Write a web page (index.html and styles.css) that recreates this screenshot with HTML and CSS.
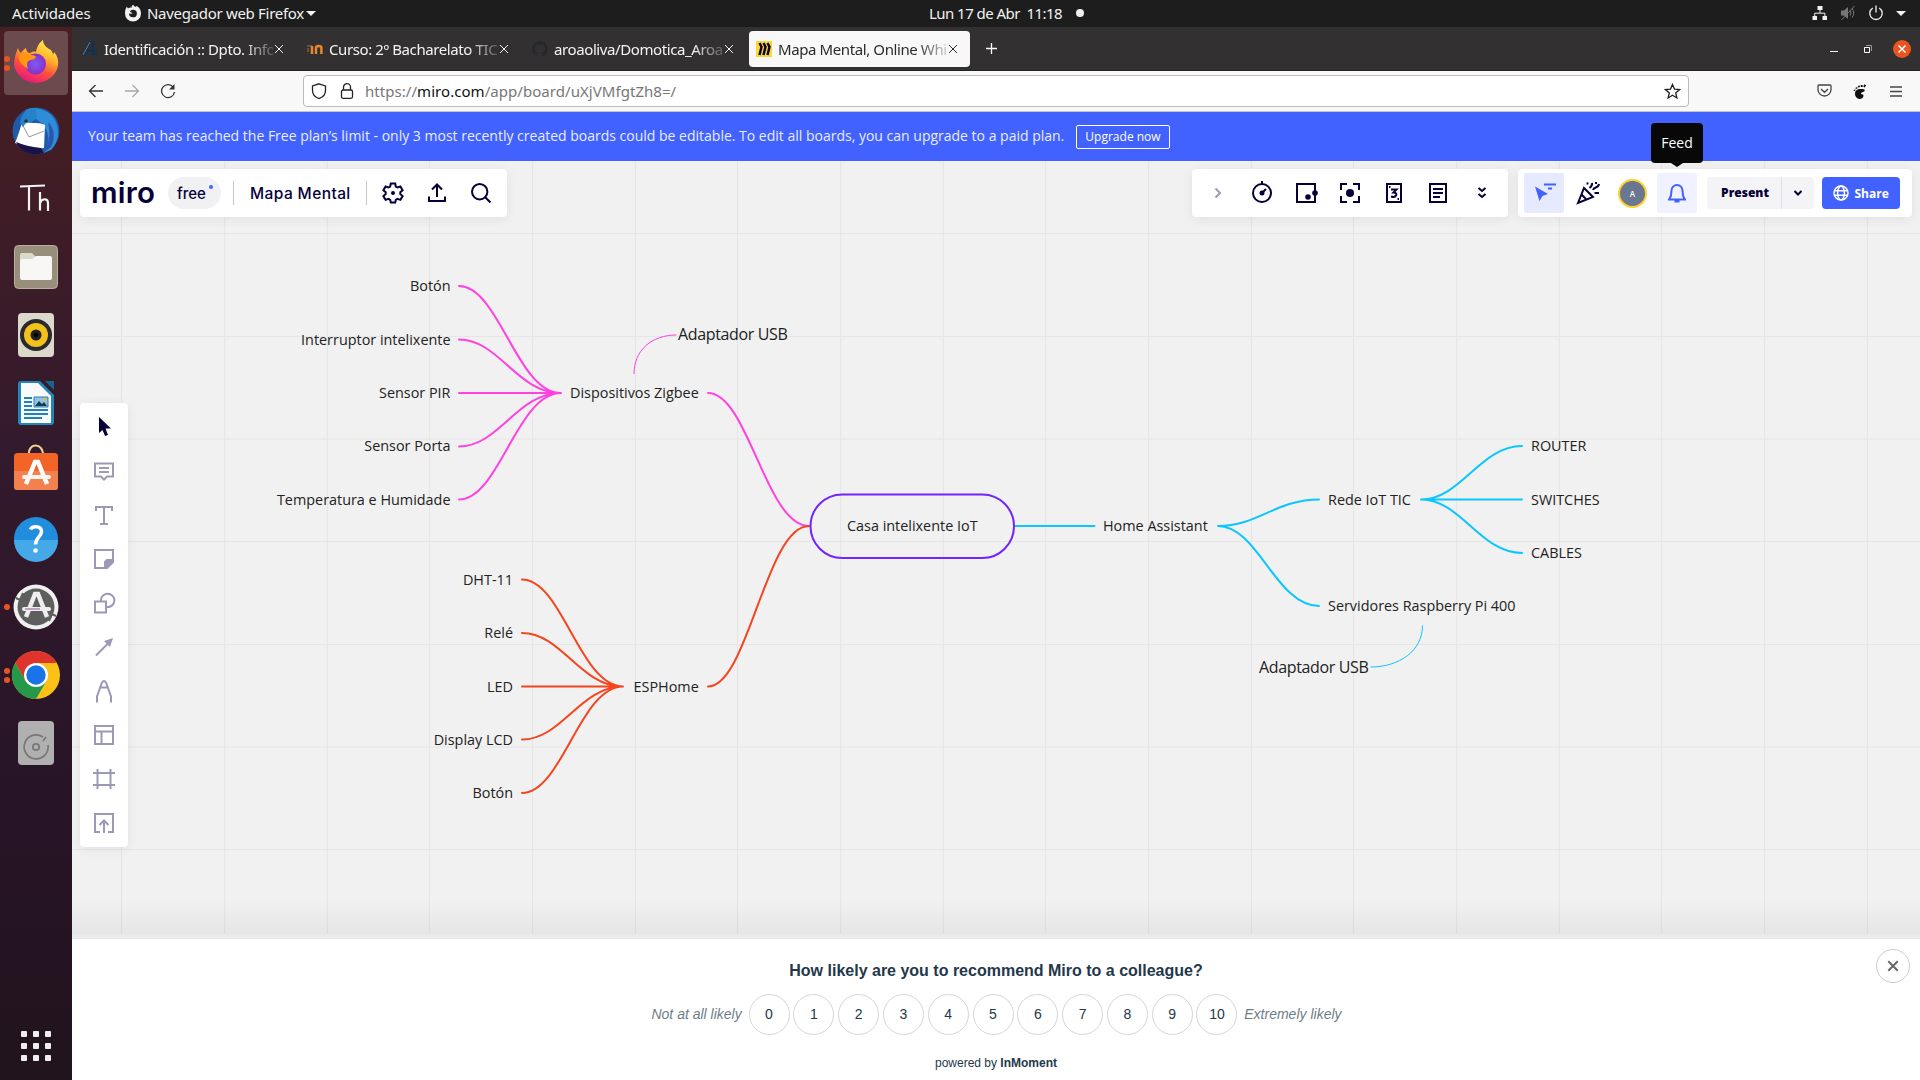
FILE: index.html
```html
<!DOCTYPE html>
<html lang="gl">
<head>
<meta charset="utf-8">
<title>Mapa Mental, Online Whiteboard</title>
<link rel="stylesheet" href="styles.css">
</head>
<body>
<div class="desktop">
  <header class="topbar">
    <span class="activities">Actividades</span>
    <span class="appmenu">
      <svg width="18" height="18" viewBox="0 0 18 18"><path d="M3 2.500c.3 1 .6 1.500 1 2C5 3.500 6.500 3.300 8 3.500 7 2.500 8 1 9.500.7c0 1 .7 1.500 2 2.100 1-.3 1.200-.8 1.200-.8C15.500 3.500 17 6 17 9.500a8 8 0 0 1-16 0C1 7 1.500 4.500 3 2.500z" fill="#f2f2f2"/><path d="M9 5.800c1.800-.2 4 1 3.900 3.600A3.900 3.900 0 0 1 5 9.300c1 .7 2.500.8 3.500-.3L6 8c0-1 1.200-1.900 3-2.200z" fill="#1d1d1d"/></svg>
      <span class="appname">Navegador web Firefox</span>
      <i class="caret"></i>
    </span>
    <span class="clock">Lun 17 de Abr&nbsp; 11:18</span><i class="clockdot"></i>
    <span class="tray">
      <svg width="16" height="16" viewBox="0 0 16 16" fill="#f2f2f2"><path d="M5.500 1h5v4h-5zM.5 11h4.500v4H.5zM10.500 11H15v4h-4.500z"/><path d="M8 5v3M2.700 11V8.200h10.200V11" fill="none" stroke="#f2f2f2"/></svg>
      <svg width="16" height="16" viewBox="0 0 16 16" fill="#777"><path d="M1 5.500h3L8 2v12l-4-3.500H1z"/><path d="M10 5.500q2 2.500 0 5M12 3.500q3.500 4.500 0 9M1.500 15 14.500 1" fill="none" stroke="#777"/></svg>
      <svg width="16" height="16" viewBox="0 0 16 16" fill="none" stroke="#f2f2f2" stroke-width="1.300"><path d="M4.800 3a6.200 6.200 0 1 0 6.400 0M8 .5v7"/></svg>
      <i class="caret"></i>
    </span>
  </header>

  <div class="workspace">
    <nav class="dock">
      <div class="launch active two"><svg width="48" height="48" viewBox="0 0 48 48"><defs><linearGradient id="ff" x1=".75" y1="0" x2=".3" y2="1"><stop offset="0" stop-color="#fff44f"/><stop offset=".35" stop-color="#ffb52e"/><stop offset=".65" stop-color="#ff4f3a"/><stop offset="1" stop-color="#e31587"/></linearGradient><radialGradient id="fp"><stop offset="0" stop-color="#7a5cf5"/><stop offset="1" stop-color="#8a2fc8"/></radialGradient></defs><path d="M6 9c1 3 2 4 3 5 1-2 3-4 5-5 0 3 2 5 4 5 2-1 4-2 6-1 1-6 4-10 7-12 0 5 4 8 8 10 1 2 2 3 2 5l1-3c3 3 5 8 4 14A22.500 22 0 0 1 2 26c0-7 2-12 4-17z" fill="url(#ff)"/><circle cx="23.500" cy="25" r="10.500" fill="url(#fp)"/><path d="M7 17c4-3 9-3 12-1 3 0 5 1 5 2-1 2-3 3-6 3-4 2-3 5-2 9-6-4-10-8-9-13z" fill="#ff980e"/></svg></div>
      <div class="launch"><svg width="48" height="48" viewBox="0 0 48 48"><circle cx="24" cy="24" r="23.500" fill="#1e5aa8"/><path d="M13 4C19-2 35 2 41 10c8 11 6 25-2 33l-8 3c7-9 7-19 0-29z" fill="#2e8dd8"/><path d="M36 15c6 6 8 15 3 25l-8 6c6-9 8-18 5-31z" fill="#2b55b0"/><path d="M3 36c4-9 6-18 8-23 5 5 14 1 22 5l-1 23C21 42 12 39 3 36z" fill="#fff"/><path d="M10 17l7 13 15-6" fill="none" stroke="#999"/><path d="M8 16C9 7 14 2 22 1c5 6 4 14-8 15l-3 4z" fill="#2583cc"/><circle cx="14" cy="14" r="1.800" fill="#333"/><path d="M4 35c7 3 15 5 25 6l3 5C20 50 8 45 4 35z" fill="#1b1248"/></svg></div>
      <div class="launch"><svg width="48" height="48" viewBox="0 0 48 48" fill="none" stroke="#f4f4f4" stroke-width="2.200"><path d="M8 11.500 33 10.500M17 11v24.500M28 17v18.500M28 28c2-5 8-5 8 0v8"/></svg></div>
      <div class="launch"><svg width="48" height="48" viewBox="0 0 48 48"><rect x="2.500" y="2.500" width="43" height="43" rx="4" fill="#978e7b" stroke="#b8af9c"/><path d="M8 12q0-2 2-2h10l4 4h14v3H8z" fill="#dcd8cc"/><path d="M8 18q0-2 2-2h10l4-3h14q2 0 2 2v20q0 2-2 2H10q-2 0-2-2z" fill="#f8f7f5"/></svg></div>
      <div class="launch"><svg width="48" height="48" viewBox="0 0 48 48"><rect x="6" y="2" width="36" height="44" rx="4" fill="#ddd8cc"/><circle cx="24" cy="24" r="16" fill="#282a30"/><circle cx="24" cy="24" r="12" fill="#f3c11c"/><circle cx="24" cy="24" r="5.500" fill="#202124"/><circle cx="24" cy="24" r="2.300" fill="#000"/></svg></div>
      <div class="launch"><svg width="48" height="48" viewBox="0 0 48 48"><path d="M9 2h19l14 14v27q0 3-3 3H9q-3 0-3-3V5q0-3 3-3z" fill="#2386b8"/><path d="M9 4h17l13 13v27H9z" fill="#f8fafb"/><path d="M33 2h9v9z" fill="#15658e"/><path d="M12 19h8M12 23h8M12 27h8M12 31h24M12 35h24M12 39h18" stroke="#1f85b7" stroke-width="2"/><path d="M22 18h14v10H22z" fill="#8ec4e4" stroke="#317ca9"/><path d="m23 27 4-5 3 3 2-2 3 4z" fill="#163b54"/><circle cx="33" cy="20.500" r="1.500" fill="#f4b929"/></svg></div>
      <div class="launch"><svg width="48" height="48" viewBox="0 0 48 48"><path d="M17 9C15-5 32-5 31 9" fill="none" stroke="#f3cf98" stroke-width="2"/><rect x="2" y="6" width="44" height="37" rx="3.500" fill="#f36427"/><path d="M2 24h44v15.500q0 3.500-3.500 3.500h-37Q2 43 2 39.500z" fill="#f38150"/><path d="m14 37 9-22h3l9 22" fill="none" stroke="#fff" stroke-width="4.500"/><path d="M12 30h25" stroke="#fff5ee" stroke-width="4" stroke-linecap="round"/></svg></div>
      <div class="launch"><svg width="48" height="48" viewBox="0 0 48 48"><circle cx="24" cy="24" r="22" fill="#208ddd"/><path d="M2 25h44a22 22 0 0 1-44 0z" fill="#45a9e9"/><path d="M18.500 14.500c1.500-4 11-4 11 2 0 5-6 6-6 13" fill="none" stroke="#fff" stroke-width="3.500"/><circle cx="23.500" cy="35.500" r="2.300" fill="#fff"/></svg></div>
      <div class="launch one"><svg width="48" height="48" viewBox="0 0 48 48"><circle cx="24" cy="24" r="22.500" fill="#f0f0f0"/><circle cx="24" cy="24" r="18.500" fill="#5e5e5e"/><path d="m4 15 4 2 3-7M44 33l-4-2-3 7" stroke="#5e5e5e" stroke-width="2" fill="none"/><path d="m14 34 9-23h3l9 23" fill="none" stroke="#eee" stroke-width="4.500"/><path d="M12 26h25" stroke="#eee" stroke-width="4" stroke-linecap="round"/><path d="M13 26h15" stroke="#91578c"/></svg></div>
      <div class="launch two"><svg width="48" height="48" viewBox="0 0 48 48"><circle cx="24" cy="24" r="24" fill="#fbc116"/><path d="M3.200 12A24 24 0 0 1 44.800 12H24L13.600 30z" fill="#df342b"/><path d="M3.200 12A24 24 0 0 0 24 48l10.400-18H13.600z" fill="#269849"/><circle cx="24" cy="24" r="12" fill="#fff"/><circle cx="24" cy="24" r="9.700" fill="#1a73e8"/></svg></div>
      <div class="launch"><svg width="48" height="48" viewBox="0 0 48 48"><rect x="6" y="2" width="36" height="44" rx="4" fill="#b0b0b0"/><path d="M31 18a12 12 0 1 0 5 8M31 22l3-4" fill="none" stroke="#777" stroke-width="1.700"/><circle cx="24" cy="28" r="3.200" fill="none" stroke="#777" stroke-width="1.700"/></svg></div>
      <div class="apps"><i></i><i></i><i></i><i></i><i></i><i></i><i></i><i></i><i></i></div>
    </nav>

    <main class="browser">
      <div class="tabs">
        <div class="tab"><svg width="16" height="16" viewBox="0 0 16 16"><path d="M1 15 8 1h3v13M4 10h11M9 13h6" fill="none" stroke="#14304d" stroke-width="2.500"/><path d="M1 14 8 1" stroke="#638297" fill="none"/></svg><span class="tabtitle">Identificación :: Dpto. Info</span><svg class="x" viewBox="0 0 8 8"><path d="m0 0 8 8M8 0 0 8"/></svg></div>
        <div class="tab"><svg width="16" height="16" viewBox="0 0 16 16" fill="none"><path d="M0 5h5" stroke="#555" stroke-width="2"/><path d="M5 5v8M9 13V7q0-2 2.700-2t2.700 2v6" stroke="#e8862e" stroke-width="2.500"/><path d="M1 7v4" stroke="#7b4c2c" stroke-width="2"/></svg><span class="tabtitle">Curso: 2º Bacharelato TIC</span><svg class="x" viewBox="0 0 8 8"><path d="m0 0 8 8M8 0 0 8"/></svg></div>
        <div class="tab"><svg width="16" height="16" viewBox="0 0 16 16"><path fill="#24292e" d="M8 0a8 8 0 0 0-2.500 15.600c.4.100.5-.2.500-.4v-1.500c-2.200.5-2.700-1-2.700-1-.4-.9-.9-1.200-.9-1.200-.7-.5.100-.5.100-.5.800.1 1.200.8 1.200.8.700 1.300 1.900.9 2.300.7.100-.5.300-.9.500-1.100-1.800-.2-3.600-.9-3.600-4 0-.9.300-1.600.8-2.100-.1-.2-.4-1 .1-2.100 0 0 .7-.2 2.200.8a7.600 7.600 0 0 1 4 0c1.500-1 2.200-.8 2.200-.8.400 1.100.2 1.900.1 2.100.5.600.8 1.300.8 2.100 0 3.100-1.900 3.700-3.700 3.900.3.300.6.800.6 1.500v2.200c0 .2.100.5.500.4A8 8 0 0 0 8 0z"/></svg><span class="tabtitle">aroaoliva/Domotica_Aroa</span><svg class="x" viewBox="0 0 8 8"><path d="m0 0 8 8M8 0 0 8"/></svg></div>
        <div class="tab current"><svg width="16" height="16" viewBox="0 0 16 16"><path fill="#fdd835" d="M0 0h16v16H0z"/><path d="m3.500 2 2 4-2 8M7.500 2l2 4-2 8M11.500 2l2 4-2 8" fill="none" stroke="#0b0733" stroke-width="2.500"/></svg><span class="tabtitle">Mapa Mental, Online Whi</span><svg class="x" viewBox="0 0 8 8"><path d="m0 0 8 8M8 0 0 8"/></svg></div>
        <svg class="newtab" width="11" height="11" viewBox="0 0 11 11"><path d="M5.500 0v11M0 5.500h11" stroke="#fff" stroke-width="1.300"/></svg>
        <div class="wincontrols">
          <svg width="8" height="8" viewBox="0 0 8 8"><path d="M0 6.500h8" stroke="#fff"/></svg>
          <svg width="8" height="8" viewBox="0 0 8 8" fill="none"><path d="M2 .5h5.500V6" stroke="#999"/><path d="M.5 2.500h5v5h-5z" stroke="#fff"/></svg>
          <svg width="18" height="18" viewBox="0 0 18 18"><circle cx="9" cy="9" r="9" fill="#e95420"/><path d="m5.500 5.500 7 7m0-7-7 7" stroke="#fff" stroke-width="1.500"/></svg>
        </div>
      </div>

      <div class="navbar">
        <svg class="nb" width="16" height="16" viewBox="0 0 16 16"><path d="M15 8H1.500M7.500 2l-6 6 6 6"/></svg>
        <svg class="nb dim" width="16" height="16" viewBox="0 0 16 16"><path d="M1 8h13.500M8.500 2l6 6-6 6"/></svg>
        <svg class="nb" width="16" height="16" viewBox="0 0 16 16"><path d="M13.500 4.500A6.500 6.500 0 1 0 14.500 9"/><path d="M14.500 1v5.500H9z" fill="#333" stroke="none"/></svg>
        <div class="url">
          <svg width="16" height="16" viewBox="0 0 16 16"><path d="M8 .8 14.500 3v4.500C14.500 12 11 14.500 8 15.500 5 14.500 1.500 12 1.500 7.500V3z"/></svg>
          <svg width="14" height="16" viewBox="0 0 14 16"><rect x="1.500" y="7" width="11" height="8.300" rx="1.500"/><path d="M3.500 7V4.200a3.500 3.500 0 0 1 7 0V7"/></svg>
          <span class="address">https://<b>miro.com</b>/app/board/uXjVMfgtZh8=/</span>
          <svg class="star" width="17" height="17" viewBox="0 0 17 17"><path d="m8.500 1.500 2 4.600 5 .5-3.800 3.300 1.200 5.100-4.400-2.700L4.100 15l1.200-5.100-3.800-3.300 5-.5z"/></svg>
        </div>
        <div class="ext">
          <svg width="15" height="14" viewBox="0 0 15 14"><path d="M2 1h11q1 0 1 1v3.500a6.500 6.500 0 0 1-13 0V2q0-1 1-1zM4 5l3.500 3.300L11 5"/></svg>
          <svg width="14" height="15" viewBox="0 0 14 15"><path d="M7.500 5c3 0 5 .3 4 2-.8 1.300-3.500 1-3.500 2.500 0 1.200 2.500.2 2.500 2.200 0 2-2 3.300-4 3.300C4 15 2 12.500 2 9.800 2 7 4 5 7.500 5z" fill="#111" stroke="none"/><path d="M12.300.8 11 3M8.700 1v2M5.700 1.700l.4 1.600M3.200 3.500l.6 1.200M1.200 5.800l.8.800" stroke="#111" stroke-width="1.900"/></svg>
          <svg width="12" height="11" viewBox="0 0 12 11"><path d="M0 1h12M0 5.500h12M0 10h12"/></svg>
        </div>
      </div>

      <div class="banner"><span class="notice">Your team has reached the Free plan’s limit - only 3 most recently created boards could be editable. To edit all boards, you can upgrade to a paid plan.</span><span class="upgrade">Upgrade now</span></div>

      <section class="board">
        <svg class="links" width="1848" height="773" viewBox="72 161 1848 773" fill="none">
          <path class="grid" d="M121.500 161v773M224.500 161v773M327.500 161v773M429.500 161v773M532.500 161v773M635.500 161v773M737.500 161v773M840.500 161v773M943.500 161v773M1045.500 161v773M1148.500 161v773M1251.500 161v773M1353.500 161v773M1456.500 161v773M1559.500 161v773M1661.500 161v773M1764.500 161v773M1867.500 161v773M72 233.500h1848M72 336.500h1848M72 439h1848M72 541.500h1848M72 644.500h1848M72 747h1848M72 849.500h1848"/>
          <g class="link pink"><path d="M459 286C499 286 517 393 561 393M459 339.500C499 339.500 517 393 561 393M459 393H561M459 446.500C499 446.500 517 393 561 393M459 499.500C499 499.500 517 393 561 393M708 393C748 393 766 526 809 526"/><path class="thin" d="M634 373.500C634 350 652 335 676 335"/></g>
          <g class="link red"><path d="M522 579.500C562 579.500 580 686.500 623 686.500M522 633C562 633 580 686.500 623 686.500M522 686.500H623M522 739.500C562 739.500 580 686.500 623 686.500M522 793C562 793 580 686.500 623 686.500M708 686.500C748 686.500 766 526 809 526"/></g>
          <g class="link blue"><path d="M1014 526H1094.500M1218 526C1258 526 1276 499.500 1319 499.500M1218 526C1258 526 1276 606 1319 606M1421 499.500C1461 499.500 1480 446 1522 446M1421 499.500H1522M1421 499.500C1461 499.500 1480 553 1522 553"/><path class="thin" d="M1422.500 626C1422.500 651 1399 667 1371 667"/></g>
          <rect x="810.500" y="494.500" width="203.500" height="63.500" rx="31.750" stroke="#7323ff" stroke-width="2"/>
        </svg>
        <div class="nodes">
          <span class="node end" style="left:378.500px;top:125px">Botón</span>
          <span class="node end" style="left:378.500px;top:179px">Interruptor intelixente</span>
          <span class="node end" style="left:378.500px;top:232px">Sensor PIR</span>
          <span class="node end" style="left:378.500px;top:285px">Sensor Porta</span>
          <span class="node end" style="left:378.500px;top:339px">Temperatura e Humidade</span>
          <span class="node" style="left:498px;top:232px">Dispositivos Zigbee</span>
          <span class="node big" style="left:606px;top:173px">Adaptador USB</span>
          <span class="node end" style="left:441px;top:419px">DHT-11</span>
          <span class="node end" style="left:441px;top:472px">Relé</span>
          <span class="node end" style="left:441px;top:526px">LED</span>
          <span class="node end" style="left:441px;top:579px">Display LCD</span>
          <span class="node end" style="left:441px;top:632px">Botón</span>
          <span class="node" style="left:561.500px;top:526px">ESPHome</span>
          <span class="node" style="left:775px;top:365px">Casa intelixente IoT</span>
          <span class="node" style="left:1031px;top:365px">Home Assistant</span>
          <span class="node" style="left:1256px;top:339px">Rede IoT TIC</span>
          <span class="node" style="left:1459px;top:285px">ROUTER</span>
          <span class="node" style="left:1459px;top:339px">SWITCHES</span>
          <span class="node" style="left:1459px;top:392px">CABLES</span>
          <span class="node" style="left:1256px;top:445px">Servidores Raspberry Pi 400</span>
          <span class="node big" style="left:1187px;top:506px">Adaptador USB</span>
        </div>

        <div class="overlay">
          <div class="toprow">
            <div class="panel brand">
              <span class="logo">miro</span>
              <span class="free">free<i></i></span>
              <i class="sep"></i>
              <span class="boardname">Mapa Mental</span>
              <i class="sep"></i>
              <svg class="ic" viewBox="0 0 24 24"><path d="m9.800 2.500-.6 3-1.700 1-2.900-1-2.200 3.800 2.300 2v1.800l-2.300 2 2.200 3.800 2.900-1 1.700 1 .6 2.600h4.400l.6-2.600 1.700-1 2.900 1 2.200-3.800-2.300-2v-1.800l2.300-2-2.200-3.800-2.900 1-1.700-1-.6-3z"/><circle cx="12" cy="12" r="1" fill="currentColor"/></svg>
              <svg class="ic" viewBox="0 0 24 24"><path d="M4 15.500V20h16v-4.500M12 16V4M7 8.500l5-5 5 5"/></svg>
              <svg class="ic" viewBox="0 0 24 24"><circle cx="10.700" cy="10.700" r="7.700"/><path d="m16.200 16.200 5.300 5.300"/></svg>
            </div>
            <div class="panel apps-bar">
              <svg class="ic faint" viewBox="0 0 24 24"><path d="m9.500 7.500 4.500 4.500-4.500 4.500"/></svg>
              <svg class="ic" viewBox="0 0 24 24"><circle cx="12" cy="12" r="9"/><path d="M12 0v3M12 12l4-4"/><circle cx="12" cy="12" r="1.500" fill="currentColor"/></svg>
              <svg class="ic" viewBox="0 0 24 24"><path d="M21 10V3H3v18h18v-7"/><circle cx="14" cy="16" r="2.800" fill="currentColor" stroke="none"/><circle cx="21" cy="12" r="2.800" fill="currentColor" stroke="none"/></svg>
              <svg class="ic" viewBox="0 0 24 24"><path d="M9 3H3v6M15 3h6v6M21 15v6h-6M9 21H3v-6"/><circle cx="12" cy="12" r="4" fill="currentColor" stroke="none"/></svg>
              <svg class="ic" viewBox="0 0 24 24"><rect x="5" y="3" width="14" height="18"/><path d="M9 8.500h5.500l-3 3c5 0 3 6-2.500 4M7 6h1.500M15.500 18H17"/></svg>
              <svg class="ic" viewBox="0 0 24 24"><rect x="4" y="3" width="16" height="18"/><path d="M7 8h10M7 12h10M7 16h7"/></svg>
              <svg class="ic" viewBox="0 0 24 24"><path d="m8.500 7 3.500 3 3.500-3M8.500 13l3.500 3 3.500-3"/></svg>
            </div>
            <div class="panel share-bar">
              <span class="tool picked"><svg viewBox="0 0 24 24"><path d="M3 5.500 16 13l-5.500 2L7.500 20z" fill="currentColor"/><path d="M12 3.500h12M16 7.500h4" stroke="currentColor" stroke-width="2"/></svg></span>
              <svg class="ic party" viewBox="0 0 24 24"><path d="M2 22 8 7l9 9-15 6zM9 8l7 7M6 14l4 4M13.500 7q3-2 2.500-5M17 9c1-4 5-1 6-6M18.500 12H23M11.500 1.500v2M20 1v2"/></svg>
              <span class="avatar">A</span>
              <span class="tool bell"><svg viewBox="0 0 24 24" fill="none" stroke="currentColor" stroke-width="2"><path d="M3 18.500h18M4.500 18Q6.500 15 6.500 9.500a5.500 5.500 0 0 1 11 0q0 5.500 2 8.500M9.500 20.500h5"/></svg><span class="tip">Feed</span></span>
              <span class="present"><b>Present</b><i><svg width="10" height="10" viewBox="0 0 10 10"><path d="m1.500 3 3.500 3.500L8.500 3"/></svg></i></span>
              <span class="share"><svg width="16" height="16" viewBox="0 0 16 16"><circle cx="8" cy="8" r="7"/><ellipse cx="8" cy="8" rx="3.400" ry="7"/><path d="M1 5.700h14M1 10.300h14"/></svg>Share</span>
            </div>
          </div>
          <div class="panel tools">
            <svg class="ic" viewBox="0 0 24 24"><path d="m7 2 12 11.500h-5.500L16 20l-3 1-2.500-6L7 18z" fill="currentColor" stroke="none"/></svg>
            <svg class="ic" viewBox="0 0 24 24"><path d="M3 4.500h18v13h-6l-3 3-3-3H3zM7 9h10M7 13h10"/></svg>
            <svg class="ic" viewBox="0 0 24 24"><path d="M4 8V4h16v4M12 4v17M8 21h8"/></svg>
            <svg class="ic" viewBox="0 0 24 24"><path d="M3 3h18v11l-7 7H3z"/><path d="M13 21v-6l2-2h6v2l-6 6z" fill="currentColor"/></svg>
            <svg class="ic" viewBox="0 0 24 24"><path d="M3 10.500h11v11H3zM9 10a6.700 6.700 0 1 1 6 6"/></svg>
            <svg class="ic" viewBox="0 0 24 24"><path d="M4 20.500 17 7.500"/><path d="m21 3-3 9-6-6z" fill="currentColor" stroke="none"/></svg>
            <svg class="ic" viewBox="0 0 24 24"><path d="M5 23.500v-6l5-14q2-3 4 0l5 14v6M8.500 8.500h7"/></svg>
            <svg class="ic" viewBox="0 0 24 24"><path d="M3 3h18v18H3zM3 8.500h18M9.500 9v12"/></svg>
            <svg class="ic" viewBox="0 0 24 24"><path d="M5.500 2v20M18.500 2v20M1 6h22M1 18h22"/></svg>
            <svg class="ic" viewBox="0 0 24 24"><path d="M8 21H3V3h18v18h-5M12 22V10M7.500 14 12 9.500l4.500 4.500"/></svg>
          </div>
        </div>
      </section>

      <section class="survey">
        <h2>How likely are you to recommend Miro to a colleague?</h2>
        <div class="scale"><em class="lo">Not at all likely</em><span>0</span><span>1</span><span>2</span><span>3</span><span>4</span><span>5</span><span>6</span><span>7</span><span>8</span><span>9</span><span>10</span><em class="hi">Extremely likely</em></div>
        <p>powered by <b>InMoment</b></p>
        <div class="close"><svg width="12" height="12" viewBox="0 0 12 12"><path d="m1.300 1.300 9.400 9.400M10.700 1.300l-9.400 9.400"/></svg></div>
      </section>
    </main>
  </div>
</div>
</body>
</html>
```
FILE: styles.css
```css
* { box-sizing: border-box; }
body { margin: 0; overflow: hidden; font-family: "Open Sans", "Noto Sans", sans-serif; }
svg { display: block; flex: none; }
.desktop { width: 1920px; height: 1080px; display: flex; flex-direction: column; }

.topbar { height: 27px; background: #1d1d1d; color: #f2f2f2; display: grid; grid-template-columns: 112px 805px 145px 1fr auto; align-items: center; padding: 0 14px 1px 12px; font: 15px "Noto Sans", sans-serif; white-space: nowrap; }
.activities { letter-spacing: -0.15px; }
.appmenu { display: flex; align-items: center; gap: 5px; }
.appname { letter-spacing: -0.3px; width: 154px; }
.caret { border: 5px solid transparent; border-top-color: #f2f2f2; border-bottom: 0; }
.clock { letter-spacing: -0.55px; }
.clockdot { width: 8px; height: 8px; border-radius: 50%; background: #f2f2f2; margin-left: 2px; }
.tray { display: flex; align-items: center; gap: 12px; }

.workspace { flex: 1; display: flex; min-height: 0; }
.dock { width: 72px; background: linear-gradient(#481e22, #331a2c 40%, #271427 75%, #21141c); display: flex; flex-direction: column; align-items: center; gap: 4px; padding-top: 4px; }
.launch { width: 64px; height: 64px; border-radius: 4px; display: grid; place-items: center; position: relative; }
.launch svg { overflow: visible; }
.launch.active { background: #6b4b4d; }
.launch.one::before, .launch.two::before, .launch.two::after { content: ""; position: absolute; left: 0; top: 29px; width: 6px; height: 6px; border-radius: 50%; background: #e95420; }
.launch.two::before { top: 25px; }
.launch.two::after { top: 34px; }
.apps { margin-top: auto; margin-bottom: 19px; display: grid; grid-template-columns: repeat(3, 6px); gap: 6px; }
.apps i { width: 6px; height: 6px; border-radius: 1px; background: #f0eeee; }

.browser { flex: 1; display: flex; flex-direction: column; min-width: 0; }
.tabs { height: 44px; background: #333031; border-bottom: 1px solid #222; display: flex; align-items: center; padding: 0 9px 0 0; color: #f4f4f4; }
.tab { width: 225px; height: 36px; padding: 0 10px; display: flex; align-items: center; font: 15px "Noto Sans", sans-serif; }
.tab.current { width: 221px; margin-left: 2px; padding: 0 10px 0 7px; background: #f8f8f8; color: #2b2b2b; border-radius: 4px; }
.tabtitle { margin-left: 6px; width: 169px; white-space: nowrap; letter-spacing: -0.4px; -webkit-mask: linear-gradient(90deg, #000 82%, #0003 100%); mask: linear-gradient(90deg, #000 82%, #0003 100%); }
.x { width: 8px; height: 8px; margin-left: 2px; stroke: currentColor; fill: none; overflow: visible; }
.newtab { margin-left: 16px; }
.wincontrols { margin-left: auto; display: flex; align-items: center; gap: 26px; }
.wincontrols svg:last-child { margin-left: -5px; }

.navbar { height: 41px; background: #f8f8f8; border-bottom: 1px solid #c4c4c4; display: flex; align-items: center; padding-left: 16px; }
.nb { margin-right: 20px; stroke: #333; fill: none; stroke-width: 1.3; }
.dim { opacity: .4; }
.url { margin-left: 107px; width: 1386px; height: 32px; border: 1px solid #bbb; border-radius: 4px; background: #fff; display: flex; align-items: center; padding: 0 7px; gap: 13px; }
.url svg { stroke: #222; fill: none; stroke-width: 1.3; }
.address { font: 15px "Noto Sans", sans-serif; color: #777; letter-spacing: .05px; margin-left: -2px; }
.address b { color: #111; font-weight: 400; }
.star { margin-left: auto; }
.ext { margin-left: auto; padding-right: 18px; display: flex; align-items: center; gap: 23px; }
.ext svg { stroke: #444; fill: none; stroke-width: 1.3; }
.ext svg:first-child { margin-right: -1.5px; }

.banner { height: 49px; background: #4262ff; color: #e8ecff; display: flex; align-items: center; padding: 0 0 3px 16px; font-size: 14px; white-space: nowrap; }
.notice { width: 988px; }
.upgrade { width: 94px; height: 24px; margin-top: 3px; border: 1px solid #fff; border-radius: 2px; display: grid; place-items: center; font-size: 12px; color: #fff; }

.board { height: 773px; position: relative; background: #f1f1f1; }
.board::after { content: ""; position: absolute; left: 0; right: 0; bottom: 0; height: 36px; background: linear-gradient(transparent, #0000000c); }
.links, .nodes { position: absolute; left: 0; top: 0; }
.grid { stroke: #e6e6e6; stroke-width: 1.2; }
.link { stroke-width: 2; stroke-linecap: round; }
.link .thin { stroke-width: 1; }
.pink { stroke: #ff42e1; }
.red { stroke: #f5451f; }
.blue { stroke: #0bc6ff; }
.node { position: absolute; transform: translateY(-50%); white-space: nowrap; font-size: 14.4px; line-height: 20px; color: #222; }
.node.end { transform: translate(-100%, -50%); }
.node.big { font-size: 16px; letter-spacing: -0.35px; }

.overlay { position: relative; padding: 8px; }
.toprow { display: flex; }
.panel { background: #fff; border-radius: 4px; box-shadow: 0 2px 12px #05003812; color: #050038; display: flex; align-items: center; }
.toprow .panel { height: 48px; }
.ic { width: 24px; height: 24px; fill: none; stroke: currentColor; stroke-width: 2; overflow: visible; }
.brand { width: 427px; padding-left: 11px; }
.brand > * { flex: none; }
.logo { font: 600 29.500px/40px Inter, sans-serif; width: 77px; margin-top: -3px; letter-spacing: .2px; }
.free { width: 53px; height: 32px; border-radius: 16px; background: #f1f1f4; display: grid; place-items: center; font: 500 15px Inter, sans-serif; padding-right: 6px; position: relative; }
.free i { position: absolute; left: 41px; top: 8px; width: 4px; height: 4px; border-radius: 50%; background: #4262ff; }
.sep { width: 1px; height: 24px; background: #c5c5d2; margin-left: 12px; }
.boardname { font: 500 15.500px Inter, sans-serif; letter-spacing: .4px; width: 116px; margin-left: 16px; white-space: nowrap; }
.boardname + .sep { margin-left: 0; margin-right: 14px; }
.brand .ic { margin-right: 20px; }
.brand .ic:last-child { margin-right: 0; }
.apps-bar { width: 316px; margin-left: 685px; padding-left: 14px; gap: 20px; }
.faint { color: #9c9ab5; }
.share-bar { width: 394px; margin-left: 10px; padding-left: 6px; }
.tool { width: 40px; height: 40px; border-radius: 2px; display: grid; place-items: center; position: relative; color: #4262ff; background: #e5eaff; }
.tool svg { width: 24px; height: 24px; }
.party { margin: 0 18px 0 12px; }
.avatar { width: 29px; height: 29px; border-radius: 50%; border: 2.500px solid #ffd02f; background: #697790; color: #fff; display: grid; place-items: center; font-size: 8px; font-weight: 600; }
.bell { margin-left: 10px; background: #f0f2ff; }
.tip { position: absolute; left: -6px; top: -50px; width: 52px; height: 40px; padding-bottom: 1px; border-radius: 4px; background: #080808; color: #fff; display: grid; place-items: center; font-size: 14px; }
.tip::after { content: ""; position: absolute; left: 20px; top: 40px; border: 6px solid transparent; border-top: 4px solid #080808; border-bottom: 0; }
.present { margin-left: 10px; width: 107px; height: 32px; border-radius: 4px; background: #f4f4f6; display: grid; grid-template-columns: 74px 1fr; font-size: 12px; font-weight: 700; }
.present b { display: grid; place-items: center; padding: 0 0 1px 2px; }
.present i { border-left: 1px solid #e1e1e8; display: grid; place-items: center; }
.present svg { fill: none; stroke: #050038; stroke-width: 2; }
.share { margin-left: 8px; width: 78px; height: 32px; border-radius: 4px; background: #4262ff; color: #fff; font-size: 12px; font-weight: 700; display: flex; align-items: center; gap: 5.500px; padding-left: 11px; }
.share svg { fill: none; stroke: #fff; stroke-width: 1.5; }
.tools { width: 48px; height: 444px; margin-top: 186px; flex-direction: column; gap: 20px; padding-top: 12px; color: #9b99b5; }
.tools .ic:first-child { color: #050038; }

.survey { flex: 1; background: #fff; border-top: 5px solid #e9eaeb; font-family: "Liberation Sans", Arial, sans-serif; color: #24384a; display: flex; flex-direction: column; align-items: center; position: relative; }
.survey h2 { margin: 22px 0 0; font-size: 16px; line-height: 20px; }
.scale { display: flex; gap: 3.800px; align-items: center; margin-top: 12.500px; padding-left: 1px; }
.scale span { width: 41px; height: 41px; border: 1px solid #d5d5d5; border-radius: 50%; display: grid; place-items: center; font-size: 14px; }
.scale em { font-size: 14px; color: #6f7d88; }
.lo { margin-right: 3px; }
.hi { margin-left: 3px; }
.survey p { margin: 20.500px 0 0; font-size: 12px; line-height: 16px; }
.close { position: absolute; right: 10px; top: 10px; width: 34px; height: 34px; border: 1px solid #ccc; border-radius: 50%; display: grid; place-items: center; }
.close svg { fill: none; stroke: #666; stroke-width: 2; }
```
